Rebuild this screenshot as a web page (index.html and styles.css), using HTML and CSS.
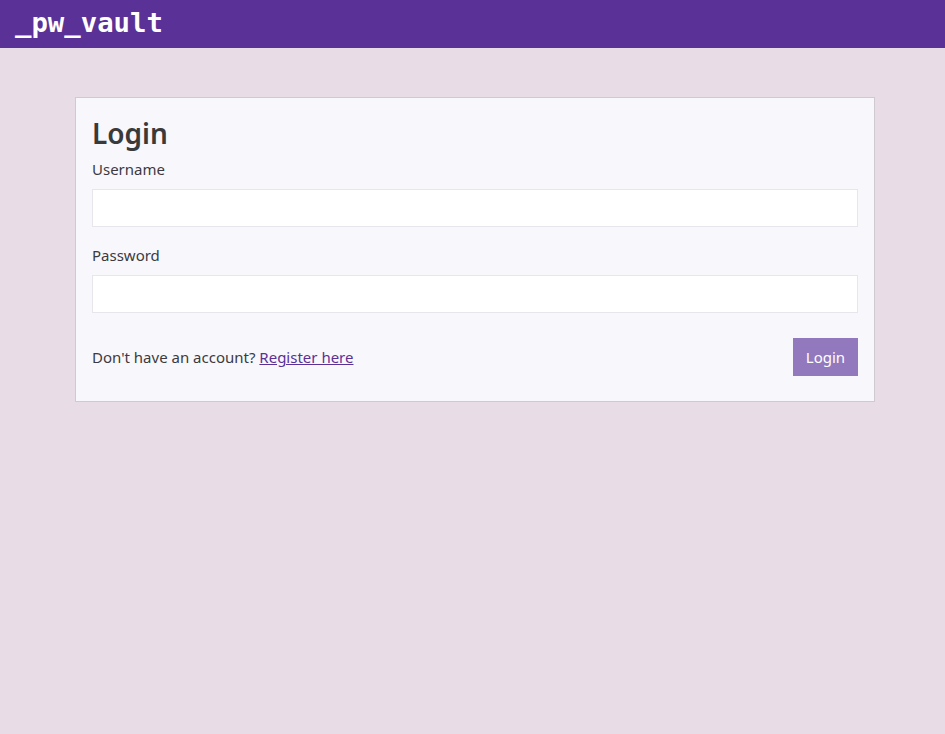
FILE: index.html
```html
<!DOCTYPE html>
<html>
<head>
<meta charset="utf-8">
<link rel="stylesheet" href="styles.css">
</head>
<body>
<header class="topbar"><span class="brand">_pw_vault</span></header>
<main class="main">
  <form class="card">
    <h1 class="title">Login</h1>
    <label class="label" for="u">Username</label>
    <input class="input" id="u" type="text">
    <label class="label label-gap" for="p">Password</label>
    <input class="input" id="p" type="password">
    <div class="footer">
      <span class="hint">Don't have an account? <a class="link" href="#">Register here</a></span>
      <button class="btn" type="button">Login</button>
    </div>
  </form>
</main>
</body>
</html>
```
FILE: styles.css
```css
html, body { margin: 0; padding: 0; }
body {
  background: #e8dde6;
  font-family: "Noto Sans", "Open Sans", sans-serif;
  color: #3c3a40;
  min-height: 734px;
}
.topbar {
  height: 48px;
  background: #5a3196;
  display: flex;
  align-items: center;
  padding: 0 15px;
}
.brand {
  font-family: "DejaVu Sans Mono", monospace;
  font-weight: bold;
  font-size: 27.3px;
  color: #ffffff;
  margin-top: -4px;
}
.main {
  padding: 49px 70px 0 75px;
}
.card {
  width: 766px;
  background: #f8f7fc;
  border: 1px solid #cfcacf;
  padding: 16px 16px 25px;
  display: flex;
  flex-direction: column;
}
.title {
  margin: 2px 0 0;
  font-size: 28px;
  font-weight: 600;
  line-height: 34px;
  color: #3a3a3a;
}
.label {
  font-size: 15px;
  line-height: 24px;
  margin-top: 7px;
}
.label-gap { margin-top: 16px; }
.input {
  margin-top: 8px;
  height: 38px;
  box-sizing: border-box;
  border: 1px solid #e8e6ec;
  background: #ffffff;
  padding: 0 8px;
  font: inherit;
}
.footer {
  margin-top: 25px;
  display: flex;
  align-items: center;
  justify-content: space-between;
}
.hint { font-size: 15px; }
.link { color: #5a3196; }
.btn {
  height: 38px;
  width: 65px;
  border: none;
  background: #9278bd;
  color: #ffffff;
  font: inherit;
  font-size: 15px;
  padding: 0;
}
```
